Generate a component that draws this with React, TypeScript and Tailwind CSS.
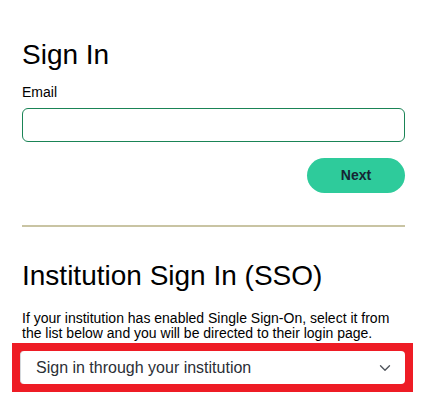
import { ChevronDown } from 'lucide-react';

export default function App() {
  return (
    <div
      className="min-h-[420px] w-[426px] bg-white pl-[22px] pr-[21px] pt-[39px] text-black"
      style={{ fontFamily: '"Liberation Sans", Arial, sans-serif' }}
    >
      <h1 className="text-[28px] leading-[32px]">Sign In</h1>

      <label className="mt-[11px] block text-[14px] leading-[20px]">Email</label>
      <input
        type="email"
        className="mt-[6px] block h-[34px] w-full rounded-[6px] border border-[#1a8456] px-3 text-[14px] outline-none"
      />

      <div className="mt-[16px] flex justify-end">
        <button className="h-[35px] w-[98px] rounded-full bg-[#2ecb9b] text-[14px] font-bold text-[#162433]">
          Next
        </button>
      </div>

      <div className="mt-[32px] h-[2px] bg-[#c9c4a3]" />

      <h2 className="mt-[33px] text-[28px] leading-[32px]">Institution Sign In (SSO)</h2>

      <p className="mt-[19px] text-[14px] leading-[15.4px]">
        If your institution has enabled Single Sign-On, select it from the list below and you will be directed to their login page.
      </p>

      <div className="-ml-[10px] mt-[1px] w-[401px] bg-[#ee1c25] p-[8px]">
        <div className="flex h-[33px] w-[385px] items-center justify-between rounded-[4px] border-l border-[#d4d8dc] bg-white pl-[15px] pr-[11px] pt-[1px]">
          <span className="text-[16px] text-[#2b2f36]">Sign in through your institution</span>
          <ChevronDown size={18} strokeWidth={1.8} className="text-[#50555c]" />
        </div>
      </div>
    </div>
  );
}
